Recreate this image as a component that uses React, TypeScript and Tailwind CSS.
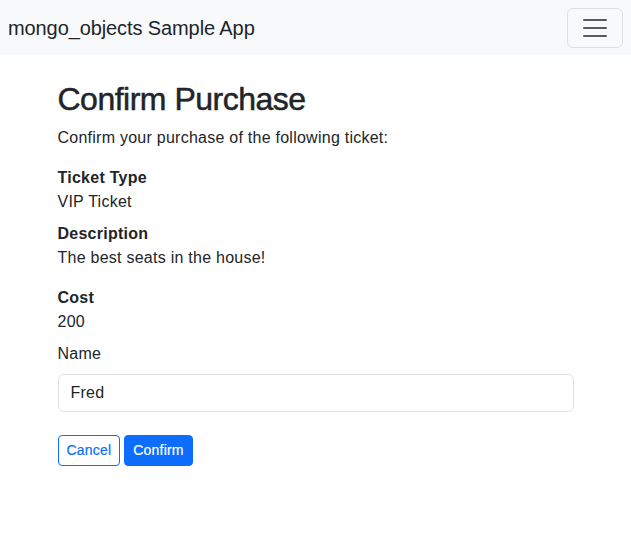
export default function App() {
  return (
    <div
      className="min-h-screen bg-white text-[#212529] text-base leading-6"
      style={{ fontFamily: '"Liberation Sans", Arial, sans-serif' }}
    >
      <nav className="flex items-center justify-between bg-[#f8f9fa] h-[55px] px-2">
        <span className="text-xl leading-[30px] tracking-[-0.1px]">mongo_objects Sample App</span>
        <button
          type="button"
          className="w-[56px] h-[40px] px-3 py-1 rounded-md border border-[rgba(0,0,0,0.1)] flex items-center justify-center"
          aria-label="Toggle navigation"
        >
          <svg width="30" height="30" viewBox="0 0 30 30">
            <path
              d="M4 7h22M4 15h22M4 23h22"
              stroke="rgba(33,37,41,0.75)"
              strokeWidth="2"
              strokeLinecap="round"
              strokeMiterlimit="10"
            />
          </svg>
        </button>
      </nav>

      <main className="w-[540px] mx-auto px-3 pt-[25px] tracking-[0.25px]">
        <h1 className="text-[32px] leading-[38px] font-medium tracking-[-0.5px] mb-2 [-webkit-text-stroke:0.5px_#212529]">
          Confirm Purchase
        </h1>
        <p className="mb-4">Confirm your purchase of the following ticket:</p>

        <div className="font-bold">Ticket Type</div>
        <div className="mb-2">VIP Ticket</div>

        <div className="font-bold">Description</div>
        <div className="mb-4">The best seats in the house!</div>

        <div className="font-bold">Cost</div>
        <div className="mb-2">200</div>

        <label className="block mb-2">Name</label>
        <input
          type="text"
          defaultValue="Fred"
          className="block w-full h-[38px] px-3 py-1.5 border border-[#dee2e6] rounded-md text-base text-[#212529] mb-[23px] outline-none tracking-[0.25px]"
        />

        <div className="flex gap-1">
          <button
            type="button"
            className="px-2 py-1 text-sm leading-[21px] tracking-[0.2px] rounded border border-[#0d6efd] text-[#0d6efd] bg-white [-webkit-text-stroke:0.2px_#0d6efd]"
          >
            Cancel
          </button>
          <button
            type="button"
            className="px-2 py-1 text-sm leading-[21px] tracking-[0.2px] rounded border border-[#0d6efd] text-white bg-[#0d6efd] [-webkit-text-stroke:0.2px_#ffffff]"
          >
            Confirm
          </button>
        </div>
      </main>
    </div>
  );
}
